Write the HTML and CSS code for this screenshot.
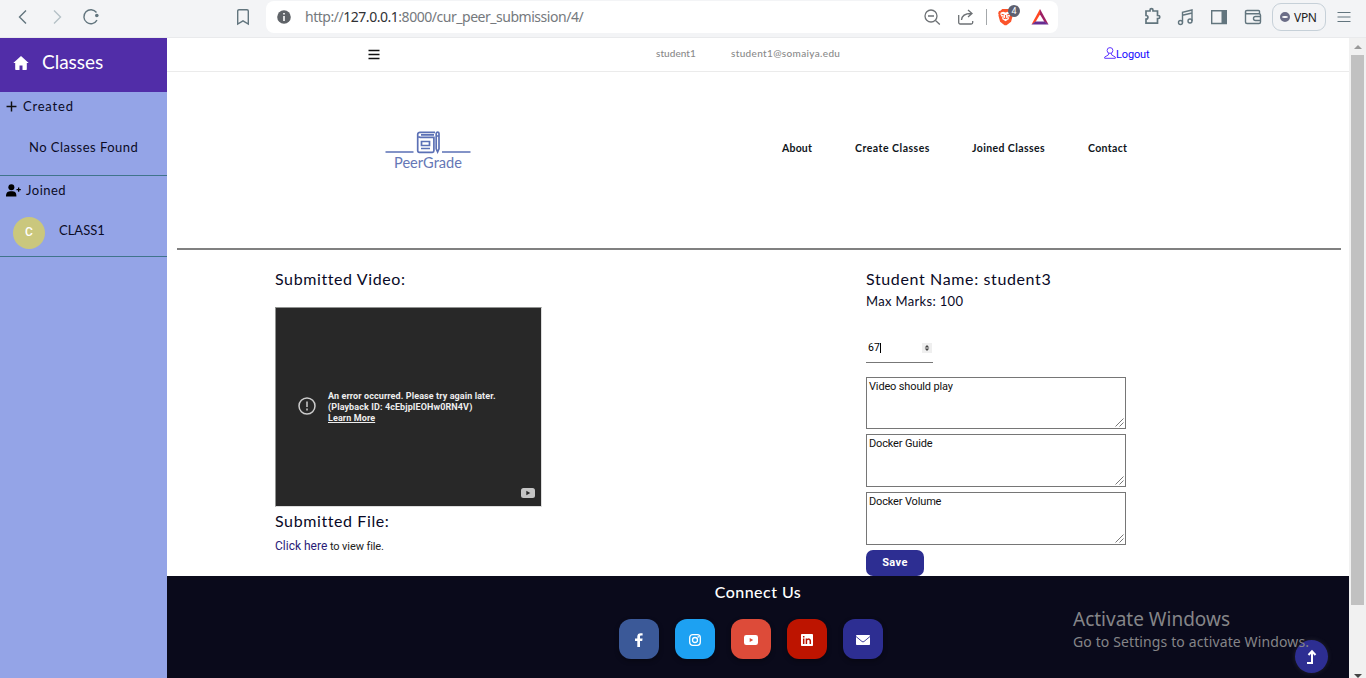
FILE: index.html
```html
<!DOCTYPE html>
<html lang="en">
<head>
<meta charset="utf-8">
<title>PeerGrade</title>
<link rel="stylesheet" href="styles.css">
</head>
<body>
<div class="browser">
  <svg class="ic back" viewBox="0 0 20 20"><path d="M13 3.5 6.5 10l6.500 6.500"/></svg>
  <svg class="ic forward" viewBox="0 0 20 20"><path d="m7 3.500 6.500 6.500L7 16.500"/></svg>
  <svg class="ic reload" viewBox="0 0 20 20"><path d="M16 13.200A7 7 0 1 1 15.500 5.500"/><circle class="dot" cx="15.800" cy="8.500" r="1.800"/></svg>
  <svg class="ic bookmark" viewBox="0 0 20 20"><path d="M4.700 4a1.300 1.300 0 0 1 1.300-1.300h8A1.300 1.300 0 0 1 15.300 4v13L10 13.800 4.700 17z"/></svg>
  <div class="address">
    <svg class="ic info" viewBox="0 0 20 20"><circle cx="10" cy="10" r="6.800"/><path d="M10 9v5M10 6v1.600"/></svg>
    <span class="url">http://<b>127.0.0.1</b>:8000/cur_peer_submission/4/</span>
    <svg class="ic gray" viewBox="0 0 20 20"><circle cx="9" cy="9" r="6"/><path d="m13.500 13.500 4.300 4M6 9h6"/></svg>
    <svg class="ic gray share" viewBox="0 0 20 20"><path d="M2.700 8v7.500a1.500 1.500 0 0 0 1.500 1.500h11a1.500 1.500 0 0 0 1.500-1.500V14M5.500 13c.4-4.500 3-6.500 9.500-6.500M12 3l4 3.500-4 3.500"/></svg>
    <i class="divider"></i>
    <div class="shield"><svg viewBox="0 0 20 20"><path fill="#fb542b" d="M5.500 1.500h7l2 1.800 1.500.5.900 2.200-.6 1.500.3 1-1.800 6.500L10 18.600h-2L3.300 15 1.500 8.500l.3-1L1.200 6l.9-2.200 1.500-.5z"/><path fill="#fff" d="m4 5.200 2.500-.6L9 5.200l2.500-.6 2.500.6.500 2-1.800 3-.4 2.200L9 14.500l-3.300-2.100-.4-2.200-1.800-3z"/><path fill="none" stroke="#fb542b" stroke-width="1.100" d="m4.800 7 2.800.8M13.200 7l-2.800.8M9 8v3M7 12l2-1 2 1M5.800 9.500l1 .8M12.200 9.500l-1 .8"/></svg><span class="count">4</span></div>
    <svg class="bat" viewBox="0 0 20 20"><path fill="#ff4724" d="M10 2v5.500L5.500 15 1.500 17.500z"/><path fill="#9e1f63" d="M10 2v5.500l4.500 7.500 4 2.500z"/><path fill="#662d91" d="M1.500 17.500 5.500 14.500h9l4 3z"/></svg>
  </div>
  <svg class="ic puzzle" viewBox="0 0 20 20"><path d="M4 4h4V3.200a1.500 1.500 0 0 1 3 0V4h4.500v4.500h.8a1.500 1.500 0 0 1 0 3h-.8v4.700H4v-4c2.600 0 2.600-3.700 0-3.700z"/></svg>
  <svg class="ic music" viewBox="0 0 20 20"><circle cx="4.500" cy="15.500" r="2"/><circle cx="14" cy="14" r="2"/><path d="M6.500 15.500V5.200L16 3v11M6.500 8.200 16 6"/></svg>
  <svg class="ic panel" viewBox="0 0 20 20"><path d="M2.700 3.700h14.600v12.800H2.700z"/><path class="fill" d="M12.500 3.500h5v13h-5z"/></svg>
  <svg class="ic wallet" viewBox="0 0 20 20"><path d="M16.500 7V4.500a1 1 0 0 0-1-1H4a1.500 1.500 0 0 0 0 3.200h12a1.500 1.500 0 0 1 1.500 1.500V15a1.500 1.500 0 0 1-1.500 1.500H4A1.500 1.500 0 0 1 2.500 15V5M17.500 9.500h-5a2 2 0 0 0 0 4h5z"/></svg>
  <div class="vpn"><i></i>VPN</div>
  <svg class="ic menu" viewBox="0 0 20 20"><path d="M3.500 5.500h13M3.500 10h13M3.500 14.500h13"/></svg>
</div>
<div class="app">
  <aside class="sidebar">
    <div class="side-head"><svg viewBox="0 0 16 14"><path d="M8 0 .3 7h1.900v6.300q0 .7.700.7h3.600V9.500h3V14h3.600q.7 0 .7-.7V7h1.900z"/></svg><span>Classes</span></div>
    <section class="created">
      <div class="side-label"><svg viewBox="0 0 10 10"><path d="M5 .5v9M.5 5h9" stroke="#111" stroke-width="1.300"/></svg><span class="lc">Created</span></div>
      <p class="none">No Classes Found</p>
    </section>
    <section class="joined">
      <div class="side-label"><svg class="user" viewBox="0 0 14 12"><circle cx="5" cy="3" r="2.800"/><path d="M0 11.500C0 8 1.500 6.800 5 6.800s4.700 1.200 4.700 4.700z"/><path d="M11.800 3.200v4M9.800 5.200h4" stroke="#000" stroke-width="1.200"/></svg><span>Joined</span></div>
      <div class="class-row"><span class="avatar">C</span><span class="cname">CLASS1</span></div>
    </section>
  </aside>
  <main class="main">
    <div class="topbar"><svg class="burger" viewBox="0 0 12 11"><path d="M.5 1.500h11M.5 5.500h11M.5 9.500h11"/></svg><span class="uname">student1</span><span class="mail">student1@somaiya.edu</span><a class="logout"><svg viewBox="0 0 12 12"><circle cx="6" cy="3.500" r="2.900"/><path d="M4.600 6.200 4.300 8 .7 10v1.300h10.600V10L7.700 8l-.3-1.800"/></svg>Logout</a></div>
    <header class="header">
      <svg class="logo" viewBox="0 0 86 42"><g fill="none" stroke="#5b70b5" stroke-width="1.700"><path d="M.5 22h28M57 22h28.500"/><path d="M50 2.300H35a2.300 2.300 0 0 0-2.300 2.300v16A1.700 1.700 0 0 0 34.400 22.300h13a1.500 1.500 0 0 0 1.500-1.500V7.300H35a2.300 2.300 0 0 1-1.500-.6M36 4.800h13"/><path d="M36.500 11.500h8v4h-8zM36 18.500h9"/><path d="M51.200 3.500a1.400 1.400 0 0 1 2.800 0v15.300l-1.400 3.200-1.400-3.200zM51 6h3"/></g><text x="9" y="38.300" textLength="68" lengthAdjust="spacingAndGlyphs">PeerGrade</text></svg>
      <nav class="nav"><a class="n1">About</a><a class="n2">Create Classes</a><a class="n3">Joined Classes</a><a class="n4">Contact</a></nav>
    </header>
    <div class="content">
      <section class="left">
        <h2 class="sv">Submitted Video:</h2>
        <div class="video">
          <div class="error"><svg viewBox="0 0 18 18"><circle cx="9" cy="9" r="8"/><path d="M9 4.500v5.500M9 11.500v2"/></svg><div>An error occurred. Please try again later.<br><span class="pid">(Playback ID: 4cEbjpIEOHw0RN4V)</span><br><u>Learn More</u></div></div>
          <svg class="yt" viewBox="0 0 14 10"><rect width="14" height="10" rx="2.500"/><path d="M5.300 2.800v4.400L9.300 5z"/></svg>
        </div>
        <h2 class="sf">Submitted File:</h2>
        <p class="file"><a>Click here</a> to view file.</p>
      </section>
      <section class="right">
        <h2 class="sn">Student Name: student3</h2>
        <p class="max">Max Marks: 100</p>
        <div class="marks"><span class="value">67</span><svg viewBox="0 0 10 10"><path d="m5 2 2.300 2.500H2.700zM5 8l2.300-2.500H2.700z"/></svg></div>
        <div class="area first">Video should play<svg viewBox="0 0 9 9"><path d="M.5 8.500l8-8M4.500 8.500l4-4"/></svg></div>
        <div class="area">Docker Guide<svg viewBox="0 0 9 9"><path d="M.5 8.500l8-8M4.500 8.500l4-4"/></svg></div>
        <div class="area">Docker Volume<svg viewBox="0 0 9 9"><path d="M.5 8.500l8-8M4.500 8.500l4-4"/></svg></div>
        <button class="save">Save</button>
      </section>
    </div>
    <footer class="footer">
      <h2 class="connect">Connect Us</h2>
      <div class="social">
        <a class="fb"><svg viewBox="0 0 14 14"><path d="M5.300 14V8H3V5.500h2.300V3.600C5.300 1.300 6.600.2 8.600.2l2 .1v2.200H9.300C8.300 2.500 8 3 8 3.800v1.700h2.600L10.200 8H8v6z"/></svg></a>
        <a class="ig"><svg viewBox="0 0 14 14"><g fill="none" stroke="#fff" stroke-width="1.300"><rect x="1.700" y="1.700" width="10.600" height="10.600" rx="3"/><circle cx="7" cy="7" r="2.500"/></g><circle cx="10.200" cy="3.900" r=".8"/></svg></a>
        <a class="tube"><svg viewBox="0 0 14 14"><path fill-rule="evenodd" d="M2.300 2h9.400Q14 2 14 4.300v5.400Q14 12 11.700 12H2.300Q0 12 0 9.700V4.300Q0 2 2.300 2zm3.400 3v4l3.500-2z"/></svg></a>
        <a class="li"><svg viewBox="0 0 14 14"><rect x="1" y="1" width="12" height="12" rx=".8"/><path fill="none" stroke="#bd1400" stroke-width="1.500" d="M3.700 5.500V11M3.700 2.900v1.500M6.400 5.500V11M6.400 8c0-2.400 3.900-2.600 3.900 0v3"/></svg></a>
        <a class="em"><svg viewBox="0 0 14 14"><rect y="2" width="14" height="10" rx=".8"/><path fill="none" stroke="#2d2e92" stroke-width=".9" d="m0 3.500 6 5q1 .8 2 0l6-5"/></svg></a>
      </div>
    </footer>
  </main>
  <div class="scrollbar"><i class="up"></i><i class="thumb"></i><i class="down"></i></div>
</div>
<div class="totop"><svg viewBox="0 0 12 16"><path d="M1 14h5V2.500M2.500 6 6 2.200 9.500 6"/></svg></div>
<div class="watermark"><div class="w1">Activate Windows</div><div class="w2">Go to Settings to activate Windows.</div></div>
</body>
</html>
```
FILE: styles.css
```css
* { box-sizing: border-box; }
body { margin: 0; width: 1366px; height: 678px; overflow: hidden; position: relative; background: #fff; font-family: Roboto, sans-serif; }
h2, p { margin: 0; font-weight: 400; }
svg { display: block; flex: none; }
span, a { white-space: nowrap; }

.browser { height: 38px; display: flex; background: #f3f4f6; border-bottom: 1px solid #e9eaec; }
.ic { width: 20px; height: 20px; margin-top: 7px; fill: none; stroke: #62757e; stroke-width: 1.4; }
.back { margin-left: 13px; }
.forward { margin-left: 14px; stroke: #b5c1c7; }
.reload { margin-left: 14px; }
.reload .dot { fill: #62757e; stroke: none; }
.bookmark { margin-left: 132px; }
.address { width: 792px; height: 32px; margin: 1px 0 0 13px; padding: 0 8px; display: flex; background: #fff; border-radius: 8px; }
.address .ic { margin-top: 6px; }
.info circle { fill: #5f6368; stroke: none; }
.info path { stroke: #fff; stroke-width: 1.6; }
.url { margin-left: 11px; width: 617px; font: 14px/32px "Noto Sans", sans-serif; letter-spacing: -0.47px; color: #75797d; }
.url b { font-weight: 400; color: #303134; }
.address .gray { stroke: #6d7175; stroke-width: 1.3; }
.address .share { margin-left: 14px; }
.divider { width: 1px; height: 16px; background: #a4a8ab; margin: 8px 0 0 10px; }
.shield { position: relative; width: 20px; height: 20px; margin: 6px 0 0 10px; }
.shield svg { width: 19px; height: 20px; }
.count { position: absolute; left: 11px; top: -2px; width: 12px; height: 12px; border-radius: 6px; background: #5d6070; color: #fff; font: 9px/12px Roboto, sans-serif; text-align: center; }
.bat { width: 20px; height: 20px; margin: 6px 0 0 13px; }
.puzzle { margin-left: 84px; stroke-width: 1.7; }
.music { margin-left: 14px; }
.panel { margin-left: 13px; }
.panel .fill { fill: #62757e; stroke: none; }
.wallet { margin-left: 14px; }
.vpn { width: 54px; height: 28px; margin: 3px 0 0 9px; border: 1px solid #c6d0d8; border-radius: 9px; display: flex; align-items: center; padding-left: 7px; gap: 4px; font: 12px "Noto Sans", sans-serif; letter-spacing: -0.3px; color: #222; }
.vpn i { width: 10px; height: 10px; border-radius: 5px; border: 0 solid #6b6d87; border-width: 4px 2px; background: #fff; }
.menu { margin-left: 8px; stroke-width: 1.2; }

.app { display: flex; height: 640px; }
.sidebar { width: 167px; background: #94a4e7; font: 13px "Lato", sans-serif; color: #0b0b25; }
.side-head { height: 54px; background: #512da8; display: flex; padding-left: 13px; color: #fff; font-size: 19px; line-height: 47px; }
.side-head svg { width: 16px; height: 14px; margin-top: 18px; fill: #fff; }
.side-head span { margin-left: 13px; }
.created { height: 84px; border-bottom: 1px solid #40748c; }
.joined { height: 81px; border-bottom: 1px solid #40748c; }
.side-label { display: flex; height: 30px; padding-left: 6px; line-height: 28px; letter-spacing: .5px; }
.side-label .lc { letter-spacing: .8px; }
.side-label svg { width: 11px; height: 11px; margin-top: 9px; }
.side-label span { margin-left: 6px; }
.side-label .user { width: 15px; height: 13px; margin-top: 8px; }
.side-label .user + span { margin-left: 5px; }
.none { padding-left: 29px; line-height: 50px; letter-spacing: .48px; }
.class-row { display: flex; padding: 11px 0 0 13px; }
.avatar { width: 32px; height: 32px; border-radius: 16px; background: #cac77d; color: #fff; font: 500 12px/31px Roboto, sans-serif; text-align: center; }
.cname { margin-left: 14px; line-height: 26px; }

.main { width: 1182px; height: 640px; }
.topbar { height: 34px; border-bottom: 1px solid #ebebeb; display: flex; font: 500 10px/31px "Lato", sans-serif; color: #898989; }
.burger { width: 12px; height: 11px; margin: 11px 0 0 201px; stroke: #111; stroke-width: 1.7; }
.uname { margin-left: 276px; width: 75px; letter-spacing: .05px; }
.mail { width: 374px; letter-spacing: .34px; }
.logout { display: flex; font: 11px/34px Roboto, sans-serif; letter-spacing: -.15px; color: #1508ff; }
.logout svg { width: 12px; height: 12px; margin: 9px 0 0 -1px; fill: none; stroke: #6239ff; stroke-width: 1; }
.header { height: 178px; margin: 0 8px 0 10px; border-bottom: 2px solid #808080; display: flex; }
.logo { width: 86px; height: 42px; margin: 58px 0 0 208px; }
.logo text { font: 14.500px Lato, sans-serif; fill: #6577b6; }
.nav { display: flex; margin-left: 311px; font: 700 10.500px/152px "Lato", sans-serif; color: #10151b; }
.n1 { width: 73px; letter-spacing: .2px; }
.n2 { width: 117px; letter-spacing: .5px; }
.n3 { width: 116px; letter-spacing: .4px; }
.n4 { letter-spacing: .35px; }
.content { height: 326px; display: flex; padding-left: 108px; color: #090926; }
.content h2 { font: 16px/20px Lato, sans-serif; letter-spacing: .6px; }
.left { width: 591px; padding-top: 19px; }
.video { width: 267px; height: 200px; margin-top: 18px; background: #282828; border: 1px solid #909290; border-right-color: #ddd; border-bottom-color: #ddd; display: flex; flex-direction: column; }
.error { display: flex; height: 179px; padding: 83px 0 0 22px; font: 700 9px/11px Roboto, sans-serif; letter-spacing: .1px; color: #eee; white-space: nowrap; }
.error svg { width: 18px; height: 18px; margin: 6px 12px 0 0; fill: none; stroke: #ccc; stroke-width: 1.5; }
.yt { width: 14px; height: 10px; margin: 1px 0 0 245px; fill: #c5c5c5; }
.yt path { fill: #282828; }
.content .sf { margin-top: 4px; }
.file { margin-top: 5px; font-size: 11px; line-height: 20px; letter-spacing: -.1px; color: #222; }
.file a { font-size: 12px; letter-spacing: 0; color: #291b77; }
.right { padding-top: 19px; }
.content .sn { letter-spacing: .63px; }
.max { font: 13px/16px Lato, sans-serif; margin-top: 4px; letter-spacing: .33px; }
.marks { width: 67px; height: 29px; margin-top: 25px; border-bottom: 1px solid #777; padding-left: 2px; display: flex; }
.value { height: 10px; line-height: 10px; margin-top: 9px; border-right: 1px solid #000; font-size: 10.500px; color: #000; }
.marks svg { width: 10px; height: 10px; margin: 9px 1px 0 auto; background: #efefef; fill: #444; }
.area { position: relative; width: 260px; height: 53px; border: 1px solid #767676; padding: 2px; font-size: 11px; line-height: 14px; letter-spacing: -.15px; color: #111; margin-bottom: 5px; }
.first { height: 52px; margin-top: 14px; }
.area svg { position: absolute; right: 1px; bottom: 1px; width: 9px; height: 9px; stroke: #555; stroke-width: .8; }
.save { display: block; width: 58px; height: 26px; border: 0; border-radius: 7px; padding: 0; background: #2d2e92; color: #fff; font: 700 11px/24px Roboto, sans-serif; letter-spacing: .4px; }
.footer { height: 102px; background: #0a0a1b; color: #fff; }
.connect { text-align: center; font: 500 16px/34px Lato, sans-serif; letter-spacing: .45px; height: 34px; line-height: 32px; }
.social { display: flex; justify-content: center; gap: 16px; padding: 9px 14px 0 0; }
.social a { width: 40px; height: 40px; border-radius: 12px; display: grid; place-items: center; box-shadow: 0 2px 5px #0005; }
.social svg { width: 14px; height: 14px; fill: #fff; margin-top: 2px; }
.social .fb { background: #3b5998; }
.social .ig { background: #1da1f2; }
.social .tube { background: #dd4b39; }
.social .li { background: #bd1400; }
.social .em { background: #2d2e92; }
.scrollbar { width: 17px; height: 640px; background: #f1f1f1; display: flex; flex-direction: column; align-items: center; }
.up { margin-top: 7px; border: 4px solid transparent; border-top: 0; border-bottom-color: #999; }
.thumb { width: 13px; height: 550px; margin-top: 6px; background: #c1c1c1; }
.down { margin-top: 69px; border: 4px solid transparent; border-bottom: 0; border-top-color: #444; }
.totop { position: absolute; left: 1295px; top: 640px; width: 33px; height: 33px; border-radius: 17px; background: #2d2e92; display: grid; place-items: center; box-shadow: 0 0 5px #8883; }
.totop svg { width: 12px; height: 16px; fill: none; stroke: #fff; stroke-width: 2; }
.watermark { position: absolute; left: 1073px; top: 607px; font-family: "Noto Sans", sans-serif; color: #858588; white-space: nowrap; }
.w1 { font-size: 19px; line-height: 24px; }
.w2 { font-size: 14px; line-height: 22px; letter-spacing: .12px; }
```
